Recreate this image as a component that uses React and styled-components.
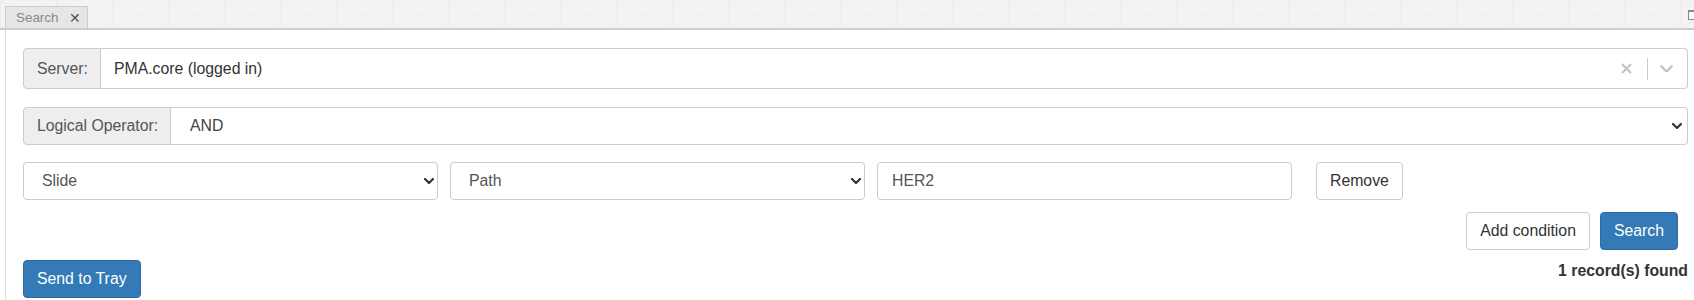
import React from 'react';
import styled, { createGlobalStyle } from 'styled-components';

const GlobalStyle = createGlobalStyle`
    body {
        margin: 0;
        background: #fff;
        font-family: "Liberation Sans", Arial, sans-serif;
        font-size: 15.8px;
        color: #333;
    }
`;

const Page = styled.div`
    width: 1694px;
    height: 300px;
    overflow: hidden;
`;

const Header = styled.div`
    height: 28px;
    display: flex;
    align-items: flex-end;
    padding-left: 5px;
    border-bottom: 2px solid #cdcdcd;
    background:
        linear-gradient(to right, #ececec 1px, transparent 1px) 0 0 / 56px 100%,
        linear-gradient(to top right, transparent calc(50% - 0.6px), #eaeaea 50%, transparent calc(50% + 0.6px)) 0 0 / 56px 28px,
        linear-gradient(to bottom right, transparent calc(50% - 0.6px), #eaeaea 50%, transparent calc(50% + 0.6px)) 0 0 / 56px 28px,
        #f3f3f3;
`;

const Tab = styled.div`
    height: 22px;
    width: 83px;
    box-sizing: border-box;
    display: flex;
    align-items: center;
    padding-left: 10px;
    gap: 11px;
    background: #e6e6e6;
    border: 1px solid #cccccc;
    border-bottom: none;
    font-size: 13.4px;
    color: #888;
`;

const TabClose = styled.span`
    font-size: 14px;
    color: #555;
    line-height: 1;
`;

const MaxIcon = styled.div`
    margin-left: auto;
    margin-right: -4px;
    align-self: center;
    width: 8px;
    height: 7px;
    border: 1px solid #888;
    border-top-width: 2px;
    background: #fff;
    margin-top: 2px;
`;

const Panel = styled.div`
    margin-left: 5px;
    border-left: 1px solid #dcdcdc;
    padding: 18px 6px 0 17px;
    height: 270px;
    box-sizing: border-box;
    display: flex;
    flex-direction: column;
`;

const InputGroup = styled.div`
    display: flex;
    height: ${p => p.$h}px;
    margin-bottom: ${p => p.$mb}px;
`;

const Addon = styled.div`
    width: ${p => p.$w}px;
    box-sizing: border-box;
    display: flex;
    align-items: center;
    padding-left: 13px;
    background: #eeeeee;
    border: 1px solid #cccccc;
    border-radius: 4px 0 0 4px;
    color: #555;
`;

const Control = styled.div`
    flex: 1;
    display: flex;
    align-items: center;
    border: 1px solid #cccccc;
    border-left: ${p => (p.$joined ? 'none' : '1px solid #cccccc')};
    border-radius: ${p => (p.$joined ? '0 4px 4px 0' : '4px')};
    padding-left: ${p => p.$pl}px;
    padding-right: ${p => p.$pr}px;
    color: ${p => p.$color || '#555'};
    background: #fff;
    min-width: 0;
`;

const Value = styled.span`
    flex: 1;
    white-space: nowrap;
`;

const Indicators = styled.div`
    display: flex;
    align-items: center;
    height: 100%;
`;

const Separator = styled.span`
    width: 1px;
    height: 22px;
    background: #cccccc;
    margin: 0 12px 0 15px;
`;

const ConditionRow = styled.div`
    display: flex;
    height: 38px;
    gap: 12px;
    margin-bottom: 12px;
`;

const Field = styled(Control)`
    flex: 0 0 415px;
    box-sizing: border-box;
`;

const Button = styled.button`
    height: 38px;
    box-sizing: border-box;
    padding: 0 13px;
    font-family: inherit;
    font-size: 15.8px;
    border-radius: 4px;
    border: 1px solid ${p => (p.$primary ? '#2e6da4' : '#cccccc')};
    background: ${p => (p.$primary ? '#337ab7' : '#fff')};
    color: ${p => (p.$primary ? '#fff' : '#333')};
    margin-left: ${p => p.$ml || 0}px;
    cursor: pointer;
`;

const ActionRow = styled.div`
    display: flex;
    justify-content: flex-end;
    gap: 10px;
    padding-right: 10px;
    margin-bottom: 10px;
`;

const FooterRow = styled.div`
    display: flex;
    justify-content: space-between;
    align-items: flex-start;
`;

const Records = styled.div`
    font-weight: bold;
    color: #333;
    line-height: 22px;
`;

const Chevron = ({ color = '#333', w = 10, sw = 2.2 }) => (
    <svg width={w} height={w * 0.6} viewBox="0 0 10 6" fill="none">
        <path d="M1 1l4 4 4-4" stroke={color} strokeWidth={sw} strokeLinecap="round" strokeLinejoin="round" />
    </svg>
);

const ClearIcon = () => (
    <svg width="11" height="11" viewBox="0 0 11 11">
        <path d="M1 1l9 9M10 1l-9 9" stroke="#c4c4c4" strokeWidth="2.2" />
    </svg>
);

export default function App() {
    return (
        <Page>
            <GlobalStyle />
            <Header>
                <Tab>
                    Search <TabClose>✕</TabClose>
                </Tab>
                <MaxIcon />
            </Header>
            <Panel>
                <InputGroup $h={41} $mb={18}>
                    <Addon $w={78}>Server:</Addon>
                    <Control $joined $pl={13} $pr={14} $color="#333">
                        <Value>PMA.core (logged in)</Value>
                        <Indicators>
                            <ClearIcon />
                            <Separator />
                            <Chevron color="#c4c4c4" w={13} sw={1.8} />
                        </Indicators>
                    </Control>
                </InputGroup>
                <InputGroup $h={38} $mb={17}>
                    <Addon $w={148}>Logical Operator:</Addon>
                    <Control $joined $pl={19} $pr={5} $color="#444">
                        <Value>AND</Value>
                        <Chevron />
                    </Control>
                </InputGroup>
                <ConditionRow>
                    <Field $pl={18} $pr={3}>
                        <Value>Slide</Value>
                        <Chevron />
                    </Field>
                    <Field $pl={18} $pr={3}>
                        <Value>Path</Value>
                        <Chevron />
                    </Field>
                    <Field $pl={14} $pr={4}>
                        <Value>HER2</Value>
                    </Field>
                    <Button $ml={12}>Remove</Button>
                </ConditionRow>
                <ActionRow>
                    <Button>Add condition</Button>
                    <Button $primary>Search</Button>
                </ActionRow>
                <FooterRow>
                    <Button $primary>Send to Tray</Button>
                    <Records>1 record(s) found</Records>
                </FooterRow>
            </Panel>
        </Page>
    );
}
